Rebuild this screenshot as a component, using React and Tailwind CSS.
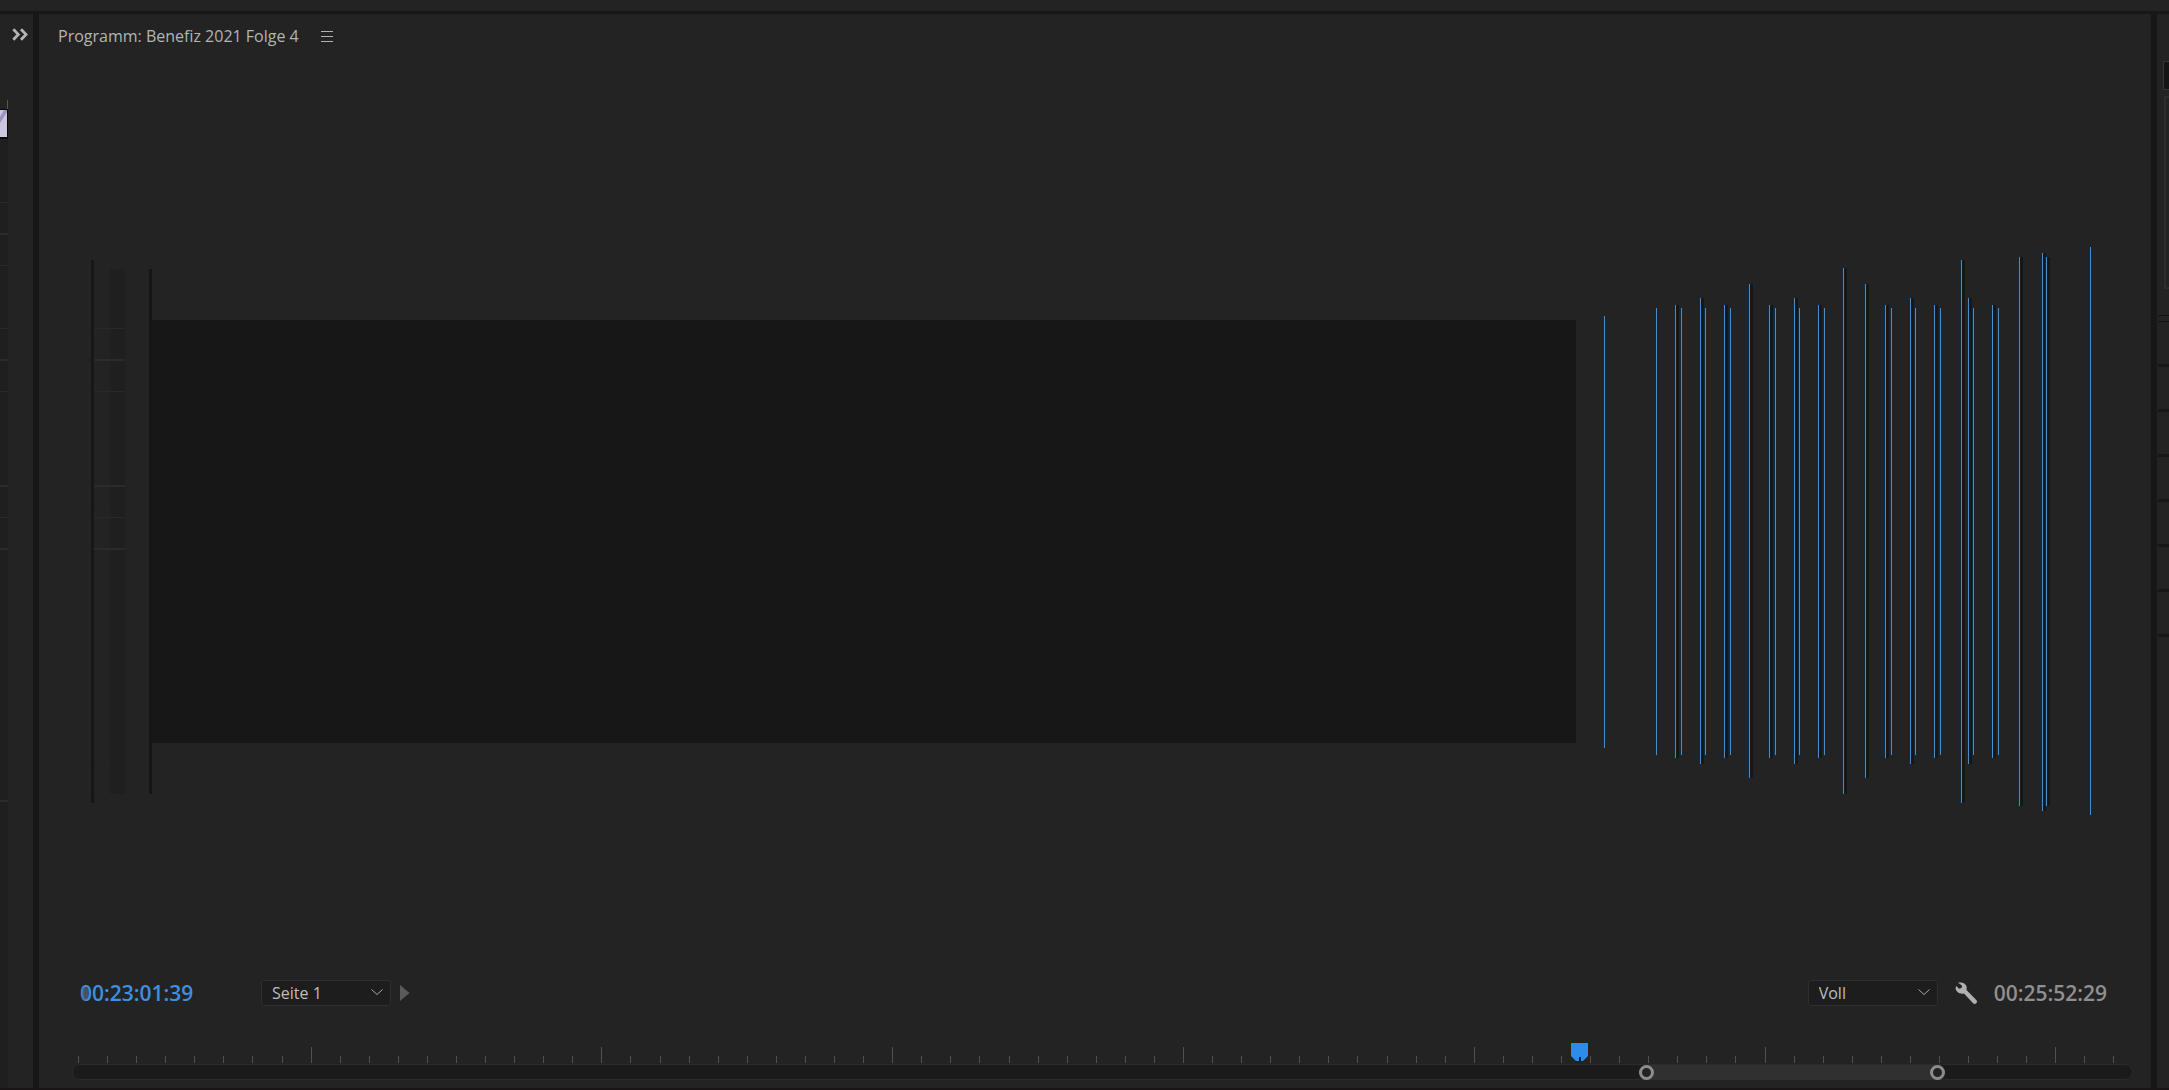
import React from "react";

const BLUE_LINES = [
  [1604, 316, 748, false], [1656, 308, 755, false], [1675, 305, 758, true], [1681, 308, 755, false],
  [1700, 298, 764, true], [1705, 308, 755, false], [1724, 305, 758, true], [1730, 308, 755, false],
  [1749, 284, 778, true], [1769, 305, 758, true], [1775, 308, 755, false], [1794, 298, 764, true],
  [1799, 308, 755, false], [1818, 305, 758, true], [1824, 308, 755, false], [1843, 268, 794, true],
  [1865, 284, 778, true], [1885, 305, 758, true], [1891, 308, 755, false], [1910, 298, 764, true],
  [1915, 308, 755, false], [1934, 305, 758, true], [1940, 308, 755, false], [1961, 260, 803, true],
  [1968, 298, 764, true], [1973, 308, 755, false], [1992, 305, 758, true], [1998, 308, 755, false],
  [2019, 257, 806, true], [2042, 253, 811, true], [2046, 257, 806, true], [2090, 247, 815, false],
];

function Chart() {
  return (
    <svg width="516" height="569" viewBox="1576 247 516 569" shapeRendering="crispEdges" className="shrink-0" aria-hidden="true">
      {BLUE_LINES.map(([x, top, bottom, shadow]) => (
        <g key={x}>
          <rect x={x - 1} y={top} width="1" height={bottom - top} fill="#0d2a45" />
          {shadow && <rect x={x + 1} y={top} width="3" height={bottom - top} fill="#151719" />}
          <rect x={x} y={top} width="1" height={bottom - top} fill="#4a8cc8" />
        </g>
      ))}
    </svg>
  );
}

function Picker({ label, value }) {
  return (
    <div className="relative">
      <select
        aria-label={label}
        defaultValue={value}
        className="block h-[26px] w-[130px] appearance-none rounded-[3px] border border-[#2e2e2e] bg-[#1d1d1d] py-0 pl-[10px] text-[16px] leading-[24px] text-[#bdbdbd] outline-none"
      >
        <option>{value}</option>
      </select>
      <svg className="pointer-events-none absolute right-2 top-[9px]" width="12" height="7" viewBox="0 0 12 7" fill="none" stroke="#a8a8a8" aria-hidden="true">
        <path d="M0.5 0.5 6 5.5 11.5 0.5" />
      </svg>
    </div>
  );
}

/* Grid lines of the neighbouring timeline, running out at the panel's edge. */
function TrackEdge() {
  return (
    <div className="flex w-2 flex-1 flex-col bg-[#1f1f1f]">
      <div className="mt-[63px] h-px bg-[#292929]" />
      <div className="mt-[30px] h-[2px] bg-[#2b2b2b]" />
      <div className="mt-[30px] h-px bg-[#292929]" />
      <div className="mt-[62px] h-px bg-[#292929]" />
      <div className="mt-[30px] h-[2px] bg-[#2b2b2b]" />
      <div className="mt-[30px] h-px bg-[#292929]" />
      <div className="mt-[93px] h-[2px] bg-[#2b2b2b]" />
      <div className="mt-[30px] h-px bg-[#292929]" />
      <div className="mt-[30px] h-[2px] bg-[#2b2b2b]" />
      <div className="mt-[250px] h-[2px] bg-[#2b2b2b]" />
    </div>
  );
}

function LeftColumn() {
  return (
    <aside className="flex w-[33px] shrink-0 flex-col">
      <div className="flex h-[86px] shrink-0 justify-end pr-[5px] pt-[14px]">
        <button type="button" aria-label="Weitere Bedienfelder" className="h-[13px] w-4">
          <svg width="16" height="13" viewBox="0 0 16 13" fill="none" stroke="#b4b4b4" strokeWidth="2.8" aria-hidden="true">
            <path d="M1.3 1.2 6.3 6.4 1.3 11.7M9 1.2 14 6.4 9 11.7" />
          </svg>
        </button>
      </div>
      <div className="ml-[7px] h-[9px] w-px shrink-0 bg-[#555]" />
      <svg width="8" height="30" viewBox="0 0 8 30" className="shrink-0" aria-hidden="true">
        <rect width="8" height="30" fill="#080808" />
        <rect y="1" width="7" height="27" fill="#cdc6df" />
        <path d="M0 8 4 1H7V3L0 14Z" fill="#9d93bd" />
      </svg>
      <TrackEdge />
    </aside>
  );
}

function RightColumn() {
  return (
    <aside className="flex w-3 shrink-0 flex-col overflow-hidden pl-px">
      <div className="ml-[5px] mt-[47px] h-[29px] shrink-0 rounded-l-[2px] border border-r-0 border-[#363636] bg-[#151515]" />
      <div className="ml-[6px] mt-[6px] h-[193px] shrink-0 border-2 border-r-0 border-[#2d2d2d]" />
      <div className="mt-[26px] h-px shrink-0 bg-[#121212]" />
      <div className="mt-[5px] h-px shrink-0 bg-[#121212]" />
      <div className="mt-[42px] flex flex-col gap-[42px]">
        {[0, 1, 2, 3, 4, 5, 6].map((row) => (
          <div key={row} className="h-[3px] bg-[#171717]" />
        ))}
      </div>
    </aside>
  );
}

function GridStub() {
  return (
    <div className="flex h-[525px] w-[31px] shrink-0 flex-col bg-linear-to-r from-[#232323] from-50% to-[#1f1f1f] to-50%">
      <div className="mt-[59px] h-px bg-[#292929]" />
      <div className="mt-[30px] h-[2px] bg-[#2b2b2b]" />
      <div className="mt-[30px] h-px bg-[#292929]" />
      <div className="mt-[93px] h-[2px] bg-[#2b2b2b]" />
      <div className="mt-[30px] h-px bg-[#292929]" />
      <div className="mt-[30px] h-[2px] bg-[#2b2b2b]" />
    </div>
  );
}

function Monitor() {
  return (
    <div className="flex min-h-[569px] items-center pl-[52px] pr-[59px]">
      <div className="h-[543px] w-[3px] shrink-0 bg-[#171717]" />
      <GridStub />
      <div className="ml-6 h-[525px] w-[3px] shrink-0 bg-[#151515]" />
      <div className="h-[423px] flex-1 bg-[#171717]" />
      <Chart />
    </div>
  );
}

function Transport() {
  return (
    <div className="flex items-center justify-between pl-[41px] pr-[44px] text-[21px] leading-[25px]">
      <div className="flex items-center">
        <div className="relative w-[181px] font-semibold text-[#3d8fe0]">
          00:23:01:39
          <span className="absolute left-[2px] top-[6px] h-[13px] w-[6px] rounded-full bg-[#5a6673]/70" />
        </div>
        <Picker label="Seite" value="Seite 1" />
        <button type="button" aria-label="Weiter" className="ml-[9px]">
          <svg width="10" height="16" viewBox="0 0 10 16" aria-hidden="true"><path d="M0 0 9.5 8 0 16Z" fill="#5a5a5a" /></svg>
        </button>
      </div>
      <div className="flex items-center">
        <Picker label="Auflösung" value="Voll" />
        <button type="button" aria-label="Einstellungen" className="ml-[17px]">
          <svg width="23" height="23" viewBox="0 0 23 23" aria-hidden="true">
            <path d="M3 0.8C7.500-.6 11.500 1.800 11.700 5.500c.1 1.200-.1 1.800-.2 2.600l9.800 10c2 2.200-.8 5.200-3.200 3.200L9 11.400C5.500 12.400 1.200 10.500 0.500 6.200L1.300 4 4 6.700 6.700 6.100 7 3.400Z" fill="#b0b0b0" />
          </svg>
        </button>
        <div className="ml-[16px] font-semibold text-[#8f8f8f]">00:25:52:29</div>
      </div>
    </div>
  );
}

function Ruler() {
  return (
    <div className="relative ml-[38px] mr-9 mt-[38px] flex h-5 items-end justify-between pb-px pl-px">
      {Array.from({ length: 71 }, (_, i) => (
        <div key={i} className={i % 10 === 8 ? "h-4 w-px bg-[#505050]" : "h-[7px] w-px bg-[#505050]"} />
      ))}
      <button type="button" aria-label="Abspielposition" className="absolute -top-px left-[73.3%] h-[18px] w-[17px]">
        <svg width="17" height="18" viewBox="0 0 17 18" aria-hidden="true">
          <path d="M0 0H17V13L12 18H5L0 13Z" fill="#2d8ceb" />
          <path d="M8 14H10V18H8Z" fill="#0a1a2b" />
        </svg>
      </button>
    </div>
  );
}

function ZoomBar() {
  return (
    <div className="ml-[33px] mr-[18px] grid h-4 grid-cols-[1566fr_306fr_187fr] rounded-full border border-[#2b2b2b] bg-[#1b1b1b]">
      <div />
      <div className="flex items-center justify-between rounded-full bg-[#303030]">
        <button type="button" aria-label="Bereichsanfang" className="size-[15px] shrink-0 rounded-full border-3 border-[#8c8c8c] bg-[#232323]" />
        <button type="button" aria-label="Bereichsende" className="size-[15px] shrink-0 rounded-full border-3 border-[#8c8c8c] bg-[#232323]" />
      </div>
      <div />
    </div>
  );
}

export default function App() {
  return (
    <div className="flex min-h-screen flex-col border-b-2 border-[#191415] bg-[#232323] font-['Open_Sans','Noto_Sans',sans-serif]">
      <div className="h-[14px] shrink-0 border-b-3 border-[#171717]" />
      <div className="flex flex-1">
        <LeftColumn />
        <main className="flex min-w-0 flex-1 flex-col border-x-6 border-[#171717] pb-2">
          <header className="flex h-11 items-center gap-[22px] pl-[19px]">
            <h1 className="text-[16px] leading-[22px] text-[#b4b4b4]">Programm: Benefiz 2021 Folge 4</h1>
            <button type="button" aria-label="Bedienfeldmenü">
              <svg width="12" height="11" viewBox="0 0 12 11" fill="#b0b0b0" shapeRendering="crispEdges" aria-hidden="true">
                <path d="M0 0H12V1H0ZM0 5H12V6H0ZM0 10H12V11H0Z" />
              </svg>
            </button>
          </header>
          <div className="flex flex-1 flex-col justify-center pt-6">
            <Monitor />
          </div>
          <Transport />
          <Ruler />
          <ZoomBar />
        </main>
        <RightColumn />
      </div>
    </div>
  );
}
